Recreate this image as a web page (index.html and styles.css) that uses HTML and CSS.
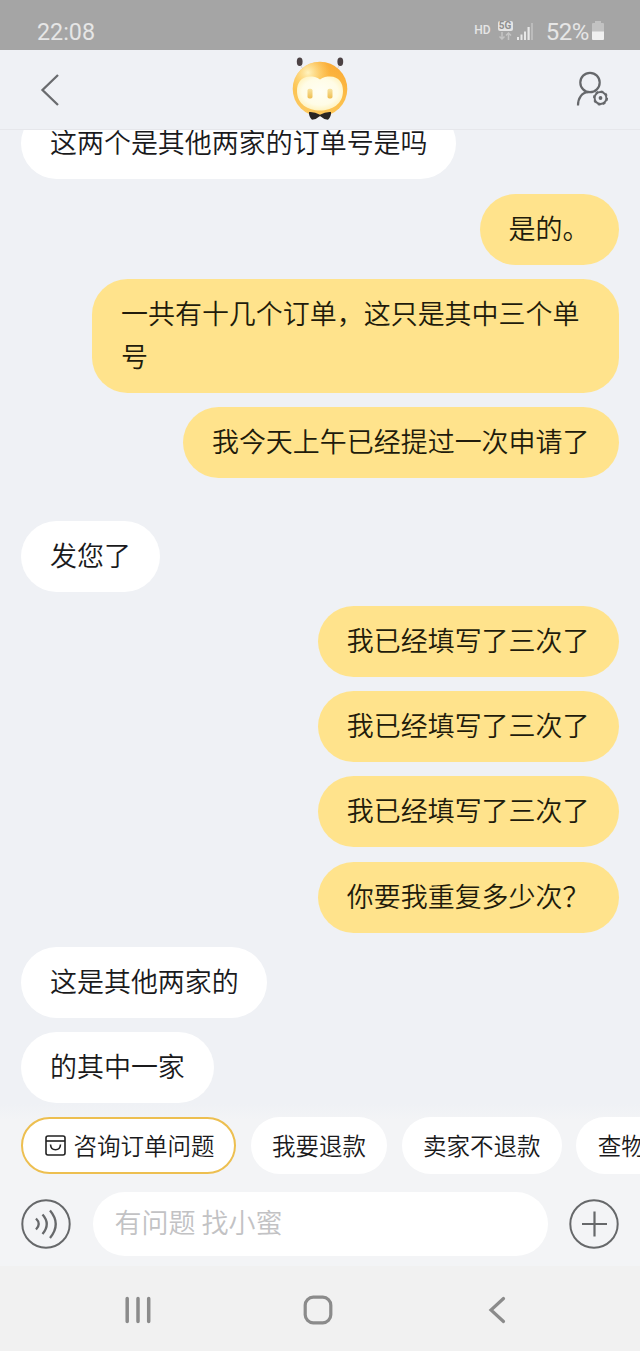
FILE: index.html
```html
<!DOCTYPE html>
<html lang="zh-CN">
<head>
<meta charset="utf-8">
<title>小蜜</title>
<link rel="stylesheet" href="styles.css">
</head>
<body>
<div class="phone">
  <div class="status">
    <span class="time">22:08</span>
    <div class="indicators">
      <span class="hd">HD</span>
      <div class="network">
        <span class="fiveg">5G</span>
        <svg class="arrows" width="14" height="8" viewBox="0 0 14 8" fill="none" stroke="#c5c5c5" stroke-width="1.5"><path d="M4 0v7M1.500 4.500 4 7l2.500-2.500M10.500 8V1M8 3.500 10.500 1 13 3.500"/></svg>
      </div>
      <svg class="signal" width="17" height="18" viewBox="0 0 17 18"><path fill="#e8e8e8" d="M0 15h2v3H0zM3.500 12.500h2V18h-2zM7 9.500h2V18H7zM10.500 5h2.200v13h-2.200z"/><path fill="#bcbcbc" d="M14 1h2v17h-2z"/></svg>
      <span class="percent">52%</span>
      <svg class="battery" width="12" height="19" viewBox="0 0 12 19"><path fill="#c2c2c2" d="M3 0h6v2h2q1 0 1 1v8H0V3q0-1 1-1h2z"/><path fill="#f0f0f0" d="M0 10.500h12V18q0 1-1 1H1q-1 0-1-1z"/></svg>
    </div>
  </div>
  <header class="header">
    <svg class="back" width="20" height="34" viewBox="0 0 20 34" fill="none" stroke="#696b6e" stroke-width="2.300"><path d="M18 2 2.500 17 18 32"/></svg>
    <svg class="mascot" width="60" height="66" viewBox="0 0 60 66">
      <defs>
        <linearGradient id="head" x1=".75" y1="0" x2=".25" y2="1"><stop offset="0" stop-color="#fbab35"/><stop offset=".55" stop-color="#fcc04c"/><stop offset="1" stop-color="#fcca62"/></linearGradient>
        <radialGradient id="shine" cx=".28" cy=".2" r=".4"><stop offset="0" stop-color="#fff3c0"/><stop offset="1" stop-color="#ffdf80" stop-opacity="0"/></radialGradient>
        <radialGradient id="face" cx=".5" cy=".45" r=".6"><stop offset="0" stop-color="#fffef4"/><stop offset=".65" stop-color="#fffce6"/><stop offset="1" stop-color="#fff0b4"/></radialGradient>
        <linearGradient id="eye" x1="0" y1="0" x2="0" y2="1"><stop offset="0" stop-color="#f8e3a0"/><stop offset="1" stop-color="#efbd50"/></linearGradient>
      </defs>
      <path d="M11 10q2 4 4 5M49 10q-2 4-4 5" fill="none" stroke="#d9cfca"/>
      <ellipse cx="9.700" cy="5.800" rx="2.900" ry="4.200" fill="#4c4244"/><ellipse cx="50.300" cy="5.800" rx="2.900" ry="4.200" fill="#4c4244"/>
      <circle cx="30" cy="33" r="27.300" fill="url(#head)"/>
      <circle cx="30" cy="33" r="27.300" fill="url(#shine)"/>
      <path fill="url(#face)" d="M30 23.500C27 21 23 20.500 20 20.500 11 20.500 7 27 7 35c0 13 11 19.500 23 19.500S53 48 53 35c0-8-4-14.500-13-14.500-3 0-7 .5-10 3Z"/>
      <rect x="17.500" y="32.800" width="5" height="9.800" rx="1.800" fill="url(#eye)"/><rect x="37.500" y="32.800" width="5" height="9.800" rx="1.800" fill="url(#eye)"/>
      <path fill="#292522" d="M19 56q5.500-.5 11 2.800 5.500-3.300 11-2.800.5 4-3 7.800-4.500-.5-8-3.800-3.500 3.300-8 3.800-3.500-3.800-3-7.800Z"/>
    </svg>
    <svg class="profile" width="34" height="36" viewBox="0 0 34 36" fill="none" stroke="#66686b" stroke-width="2.200"><circle cx="14" cy="11.500" r="9.700"/><path d="M2 34.500C2 27 6 21.500 12 21.200"/><circle cx="24.500" cy="27" r="5.900" stroke-width="2"/><circle cx="24.500" cy="27" r="6.900" stroke-width="1.300" stroke-dasharray="2.700 2.719"/><circle cx="24.500" cy="27" r="1.900" fill="#66686b" stroke="none"/></svg>
  </header>
  <main class="chat">
    <p class="bubble">这两个是其他两家的订单号是吗</p>
    <p class="bubble mine">是的。</p>
    <p class="bubble mine">一共有十几个订单，这只是其中三个单号</p>
    <p class="bubble mine">我今天上午已经提过一次申请了</p>
    <p class="bubble later">发您了</p>
    <p class="bubble mine">我已经填写了三次了</p>
    <p class="bubble mine">我已经填写了三次了</p>
    <p class="bubble mine">我已经填写了三次了</p>
    <p class="bubble mine">你要我重复多少次？</p>
    <p class="bubble">这是其他两家的</p>
    <p class="bubble">的其中一家</p>
  </main>
  <section class="composer">
    <div class="chips">
      <div class="chip active"><svg width="21" height="21" viewBox="0 0 21 21" fill="none" stroke="#222" stroke-width="1.600"><rect x="1" y="1" width="19" height="19" rx="2"/><path d="M1 6h19"/><path d="M5.500 9.500c.5 7 9.500 7 10 0"/></svg><span>咨询订单问题</span></div>
      <div class="chip">我要退款</div>
      <div class="chip">卖家不退款</div>
      <div class="chip">查物</div>
    </div>
    <div class="entry">
      <svg class="round" width="50" height="50" viewBox="0 0 50 50" fill="none" stroke="#66686a" stroke-width="2"><circle cx="25" cy="25" r="23.700"/><path stroke-width="2.300" d="M15 19.500q5.500 5.500 0 11M21.500 15.500q8.500 9.500 0 19.500M29 11.500q11.500 13.500 0 27.500"/></svg>
      <div class="field">有问题 找小蜜</div>
      <svg class="round" width="50" height="50" viewBox="0 0 50 50" fill="none" stroke="#66686a" stroke-width="2"><circle cx="25" cy="25" r="23.700"/><path stroke-width="2.200" d="M25.500 12.500v25M13 25h25"/></svg>
    </div>
  </section>
  <nav class="nav">
    <svg width="28" height="28" viewBox="0 0 28 28" stroke="#8b8b8b" stroke-width="3.500" stroke-linecap="round"><path d="M3.200 2.500v23M14 2.500v23M24.700 2.500v23"/></svg>
    <svg class="home" width="30" height="30" viewBox="0 0 30 30" fill="none" stroke="#8b8b8b" stroke-width="3.200"><rect x="2.200" y="2.200" width="25.600" height="25.600" rx="8"/></svg>
    <svg width="18" height="28" viewBox="0 0 18 28" fill="none" stroke="#8b8b8b" stroke-width="3.200" stroke-linecap="round"><path d="M15.500 2.500 3 14l12.500 11.500"/></svg>
  </nav>
</div>
</body>
</html>
```
FILE: styles.css
```css
* { box-sizing: border-box; }
body { margin: 0; font-family: "Noto Sans CJK SC DemiLight", "Noto Sans CJK SC", sans-serif; font-weight: 350; color: #1a1a1c; }
svg { display: block; flex: none; }
.phone { width: 640px; height: 1351px; display: flex; flex-direction: column; overflow: hidden; background: #eff1f5; }

.status { height: 50px; flex: none; background: #a5a5a5; color: #e6e6e6; font-family: Roboto, sans-serif; font-weight: 400; display: flex; justify-content: space-between; padding: 12px 36px 0 37px; }
.time { font-size: 23.3px; line-height: 40px; }
.indicators { display: flex; align-items: flex-start; }
.hd { font-size: 12px; font-weight: 500; line-height: 16px; margin: 10px 7px 0 0; }
.network { width: 15px; margin: 9px 4px 0 0; }
.fiveg { display: block; height: 10px; border-radius: 2px; background: #e4e4e4; color: #8e8e8e; font-size: 10px; font-weight: 700; line-height: 10px; text-align: center; }
.arrows { margin-top: 1px; }
.signal { margin: 10px 12px 0 0; }
.percent { font-size: 24px; line-height: 40px; letter-spacing: -.4px; margin-right: 3px; }
.battery { margin-top: 9px; }

.header { height: 80px; flex: none; border-bottom: 1px solid #e6e7eb; background: #eff1f5; display: grid; grid-template-columns: 1fr 60px 1fr; padding: 0 31px 0 40px; }
.back { margin-top: 23px; }
.mascot { margin: 6px 0 0 -5px; }
.profile { justify-self: end; margin: 21px -1px 0 0; }

.chat { flex: 1; min-height: 0; overflow: hidden; padding: 0 21px; display: flex; flex-direction: column; align-items: flex-start; gap: 14.330px; }
.bubble { flex: none; margin: 0; max-width: 527px; padding: 13px 28.700px 15.400px 29px; border-radius: 35.500px; background: #fff; font-size: 26.970px; line-height: 42.600px; }
.bubble:first-child { margin-top: -21.600px; }
.mine { align-self: flex-end; background: #ffe38c; color: #211b0b; padding-right: 29.500px; }
.later { margin-top: 28.300px; }

.composer { flex: none; height: 162px; padding: 13px 0 0 21px; background: linear-gradient(#eff1f5, #f3f4f6 16px); }
.chips { display: flex; gap: 14.500px; width: 619px; overflow: hidden; }
.chip { flex: none; height: 57px; border-radius: 29px; padding: 0 21.300px; background: #fff; font-size: 23.500px; line-height: 56px; white-space: nowrap; }
.active { display: flex; align-items: center; gap: 8px; border: 2px solid #edbf50; line-height: 53px; padding: 0 19.700px 0 21.500px; }
.entry { display: flex; align-items: center; justify-content: space-between; margin-top: 18px; padding-right: 21px; }
.field { width: 455px; height: 64px; border-radius: 32px; background: #fff; color: #c2c2c4; font-size: 27px; line-height: 60px; padding-left: 22px; }

.nav { flex: none; height: 85px; background: #f1f1f1; display: flex; justify-content: space-between; align-items: center; padding: 3px 134px 0 124px; }
.home { margin-right: 5px; }
```
